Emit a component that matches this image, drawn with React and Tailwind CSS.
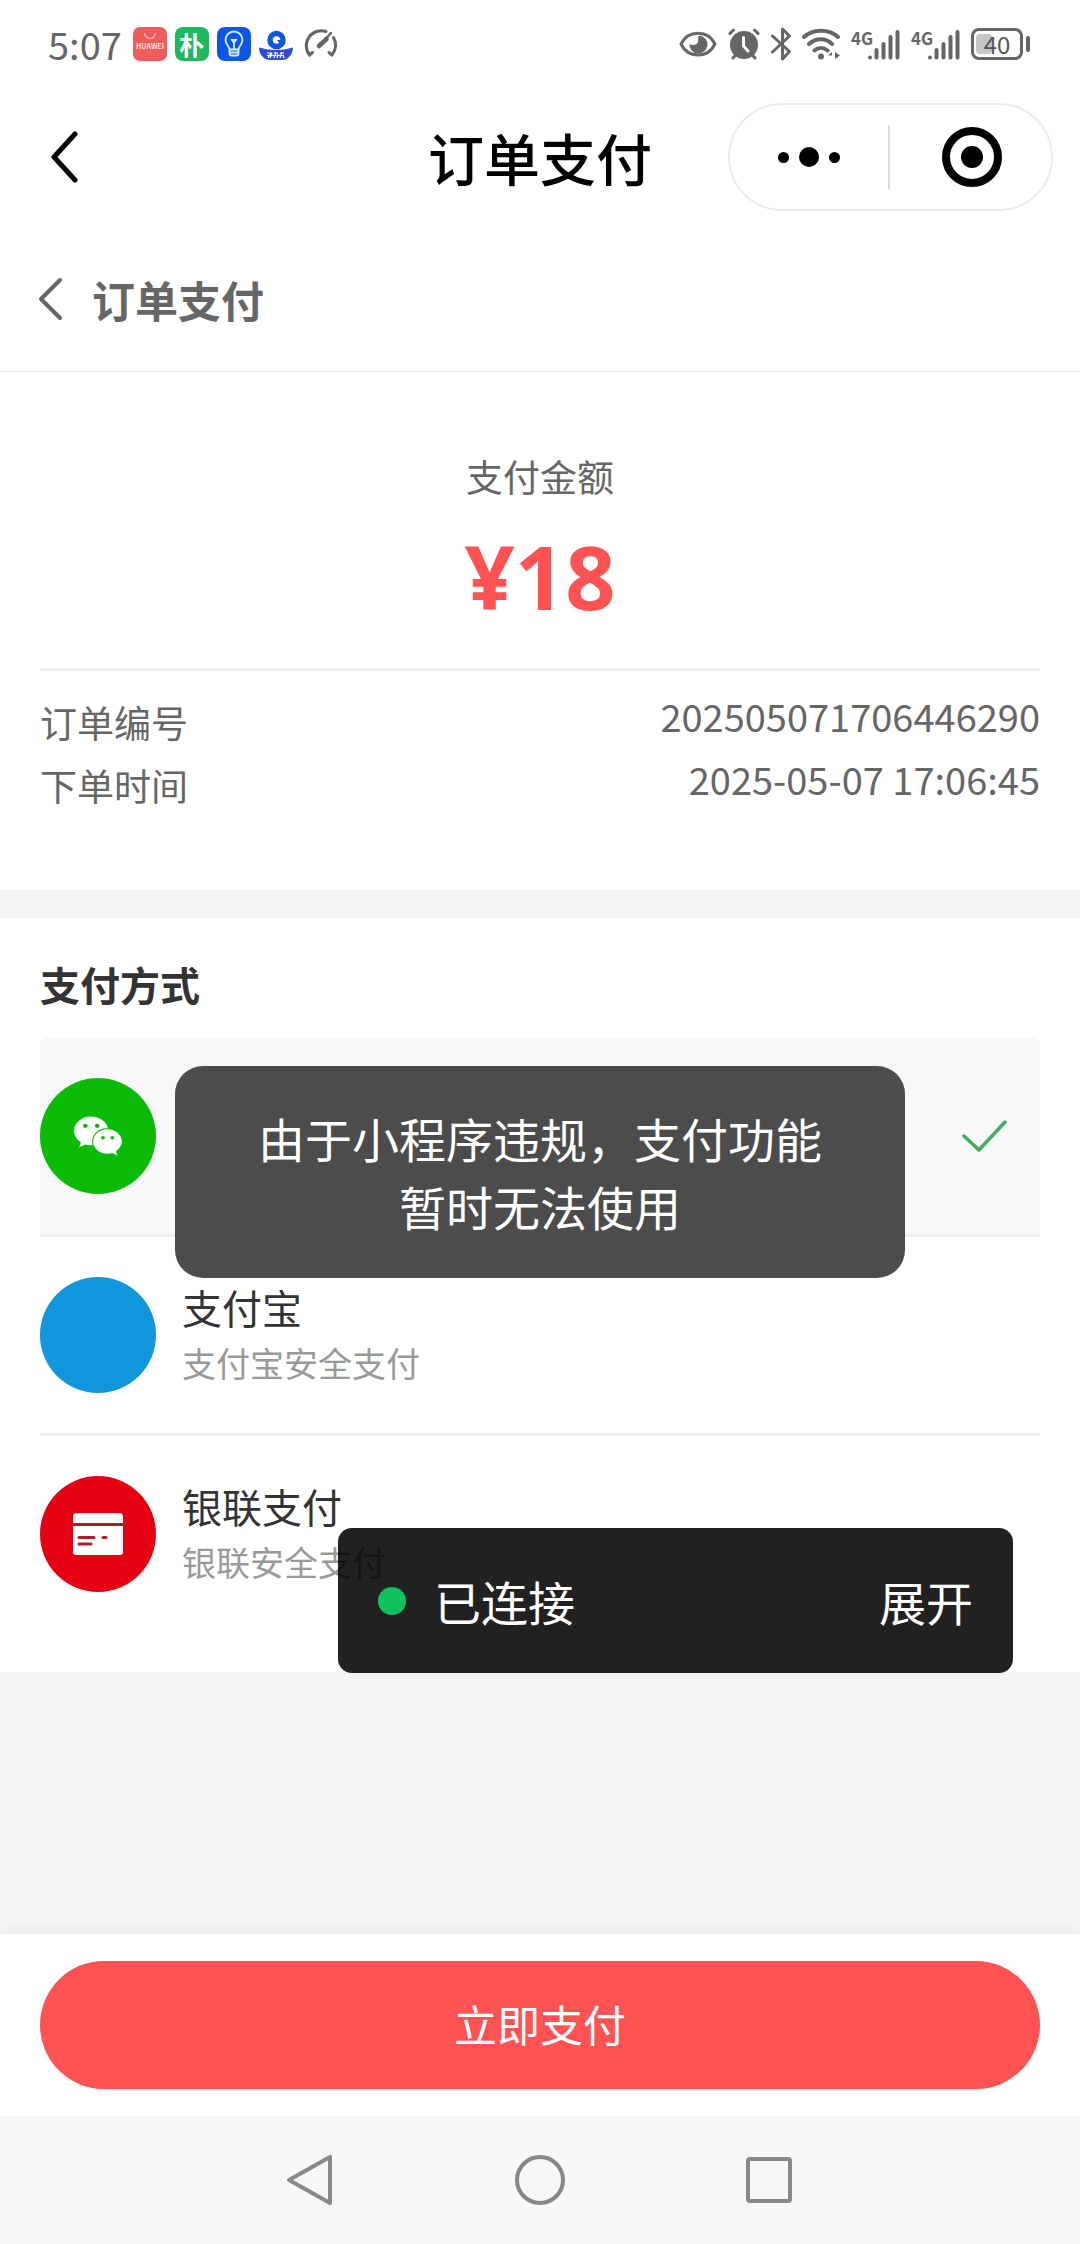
import { useState } from "react";
import { FaWeixin } from "react-icons/fa6";

const orderInfo = [
  { label: "订单编号", value: "202505071706446290" },
  { label: "下单时间", value: "2025-05-07 17:06:45" },
];

const payMethods = [
  {
    id: "wechat",
    color: "bg-[#0cba08]",
    icon: <FaWeixin className="size-[50px] text-white" />,
  },
  {
    id: "alipay",
    name: "支付宝",
    desc: "支付宝安全支付",
    color: "bg-[#1296db]",
    icon: null,
  },
  {
    id: "unionpay",
    name: "银联支付",
    desc: "银联安全支付",
    color: "bg-[#e50012]",
    icon: <CardIcon />,
  },
];

function CardIcon() {
  return (
    <svg width="50" height="42" viewBox="0 0 50 42" fill="#fff">
      <path d="M4 0h42a4 4 0 0 1 4 4v6H0V4a4 4 0 0 1 4-4z" />
      <path d="M0 13h50v26a3 3 0 0 1-3 3H3a3 3 0 0 1-3-3z" />
      <path d="M0 11.500h50" stroke="#b01c2a" strokeWidth="3" />
      <path
        d="M6 24.500h15M30 24.500h3M6 31h12"
        stroke="#b01c2a"
        strokeWidth="3"
        strokeLinecap="round"
      />
    </svg>
  );
}

function Signal() {
  return (
    <span className="flex w-[49px] items-start justify-between">
      <span className="text-[17px] leading-[17px] font-bold">4G</span>
      <svg
        className="-ml-2 shrink-0"
        width="33"
        height="31"
        viewBox="0 0 33 31"
        stroke="#666"
        strokeWidth="4"
        strokeLinecap="round"
      >
        <path d="M3 28.500v.01M9.500 28.500V21M16.500 28.500V15M23.500 28.500V8M30.500 28.500V3" />
      </svg>
    </span>
  );
}

function StatusBar() {
  return (
    <div className="flex h-[88px] items-center justify-between pr-[50px] pl-12 text-[#666]">
      <div className="flex items-center gap-2">
        <span className="text-[38px] leading-10">5:07</span>
        <svg className="ml-[3px]" width="34" height="34" viewBox="0 0 34 34">
          <rect width="34" height="34" rx="7" fill="#ee5c5c" />
          <path d="M11.500 6a5.500 5.500 0 0 0 11 0" fill="none" stroke="#fbb" strokeWidth="1.300" />
          <text x="17" y="22" fontSize="7" fontWeight="700" textAnchor="middle" fill="#ffe3e3">
            HUAWEI
          </text>
        </svg>
        <span className="flex size-[34px] items-center justify-center rounded-lg bg-[#1db860] text-[25px] leading-8 font-bold text-white">
          朴
        </span>
        <svg width="34" height="34" viewBox="0 0 34 34">
          <rect width="34" height="34" rx="8" fill="#0c56e8" />
          <g fill="none" stroke="#d7f2ff" strokeWidth="1.800" strokeLinecap="round">
            <path d="M12.500 22.500c0-3-4-5-4-9.500a8.500 8.500 0 0 1 17 0c0 4.500-4 6.500-4 9.500z" />
            <path d="M12.500 22.500v4a2 2 0 0 0 2 2h5a2 2 0 0 0 2-2v-4M13 25.500h8M17 22v-6l-2-3h4l-2 3" />
          </g>
        </svg>
        <svg width="34" height="34" viewBox="0 0 34 34">
          <circle cx="17.500" cy="13" r="6.500" fill="#fff" stroke="#0f55e0" strokeWidth="5.500" />
          <path d="M18 13h4v5z" fill="#0f55e0" />
          <path d="M0 20.500q17 5 34 0c0 8-6 12.500-11 12.500H11C6 33 0 28.500 0 20.500z" fill="#2f4bdc" />
          <path
            d="M8 26h4l-3 5M11 31l2-5M15 26h4M17 25l-2 6M18 31l1-4M21 26h4M23 25l-2 6M25 31l-1-3M8 28.500h17"
            fill="none"
            stroke="#fff"
            strokeWidth="1.200"
          />
        </svg>
        <svg width="37" height="34" viewBox="0 0 37 34" fill="none" stroke="#666" strokeWidth="3" strokeLinecap="round">
          <path d="M25 4.500A15 15 0 0 0 8.500 28l3-2.500" />
          <path d="M32.500 10.500A15 15 0 0 1 31 28l-3-2.500" />
          <path d="M30 6 20 17" strokeWidth="2.500" />
          <path d="M25.500 12 18 19" strokeWidth="4.500" />
        </svg>
      </div>

      <div className="flex items-center gap-[11px]">
        <svg width="38" height="26" viewBox="0 0 38 26" fill="none" stroke="#666" strokeWidth="3">
          <path d="M2 13C9-1.500 29-1.500 36 13 29 27.500 9 27.500 2 13z" strokeLinejoin="round" />
          <path d="M20 4.500a9 9 0 1 1-9.500 8c2 2.500 7.500 2 8.500-1.500.600-2.500-.500-5 1-6.500z" fill="#666" stroke="none" />
        </svg>
        <svg width="32" height="32" viewBox="0 0 32 32" fill="none" stroke="#666" strokeLinecap="round">
          <circle cx="16" cy="17" r="14" fill="#666" stroke="none" />
          <path d="M2 5.500 5.500 2M30 5.500 26.500 2M5 30l3-3.500M27 30l-3-3.500" strokeWidth="3" />
          <path d="M15.500 9.500V18l4.500 5" stroke="#fff" strokeWidth="3" />
        </svg>
        <svg width="20" height="34" viewBox="0 0 20 34" fill="none" stroke="#666" strokeWidth="3" strokeLinejoin="round" strokeLinecap="round">
          <path d="m1.500 9 17 15.500-7 7.500V2l7 7L1.500 25" />
        </svg>
        <svg width="38" height="32" viewBox="0 0 38 32" fill="none" stroke="#666" strokeWidth="4" strokeLinecap="round">
          <path d="M2 9c9-8.500 25-8.500 34 0M7 16c7-6.500 17-6.500 23 0M12.500 22.500c4-3.500 9-3.500 13 0" />
          <circle cx="19" cy="28.500" r="3" fill="#666" stroke="none" />
          <path d="m30 24-4 3.500h4zM33 31l5-3.500-5-3.500z" fill="#666" stroke="none" />
        </svg>
        <Signal />
        <Signal />
        <div className="flex items-center gap-[3px]">
          <span className="relative flex h-8 w-[52px] items-center justify-center rounded-lg border-[3px] border-[#666]">
            <span className="absolute left-0.5 h-5 w-4 rounded-sm bg-[#c6c6c6]" />
            <span className="relative text-2xl leading-6 text-[#555]">40</span>
          </span>
          <span className="h-4 w-1 rounded-sm bg-[#666]" />
        </div>
      </div>
    </div>
  );
}

function TitleBar() {
  return (
    <header className="relative flex h-[138px] items-center justify-between pr-[27px] pl-[46px]">
      <button type="button" aria-label="返回" className="p-1">
        <svg width="28" height="52" viewBox="0 0 28 52" fill="none" stroke="#000" strokeWidth="5" strokeLinecap="round" strokeLinejoin="round">
          <path d="M25 3 4 26l21 23" />
        </svg>
      </button>
      <h1 className="absolute inset-x-0 mx-auto w-fit text-[56px] leading-[72px] font-medium text-black">
        订单支付
      </h1>
      <div className="flex h-[108px] w-[325px] items-center rounded-full border-2 border-[#ececec]">
        <button type="button" aria-label="更多" className="flex flex-1 items-center justify-center gap-2.5">
          <span className="size-[11px] rounded-full bg-black" />
          <span className="size-5 rounded-full bg-black" />
          <span className="size-[11px] rounded-full bg-black" />
        </button>
        <span className="h-16 w-0.5 bg-[#dedede]" />
        <button type="button" aria-label="关闭" className="flex flex-1 items-center justify-center pl-1">
          <span className="flex size-[60px] items-center justify-center rounded-full border-8 border-black">
            <span className="size-[22px] rounded-full bg-black" />
          </span>
        </button>
      </div>
    </header>
  );
}

export default function App() {
  const [method, setMethod] = useState("wechat");

  return (
    <div className="relative flex min-h-screen flex-col bg-[#f5f5f5] font-['Noto_Sans_CJK_SC',sans-serif]">
      <div className="bg-white">
        <StatusBar />
        <TitleBar />
        <div className="flex h-[146px] items-center gap-7 border-b border-[#e2e2e2] px-9">
          <button type="button" aria-label="返回上一页">
            <svg width="28" height="44" viewBox="0 0 28 44" fill="none" stroke="#666" strokeWidth="4" strokeLinecap="round" strokeLinejoin="round">
              <path d="M24 3 5 22l19 19" />
            </svg>
          </button>
          <h2 className="text-[43px] leading-[60px] font-bold text-[#666]">订单支付</h2>
        </div>
      </div>

      <section className="bg-white px-10 pt-20 pb-[73px] text-[#666]">
        <div className="flex flex-col items-center border-b-[3px] border-[#efefef] pb-11">
          <p className="text-[37px] leading-[48px]">支付金额</p>
          <p className="mt-7 font-['Open_Sans','Noto_Sans_CJK_SC',sans-serif] text-[88px] leading-[96px] font-bold text-[#ff5353]">
            ¥18
          </p>
        </div>
        <dl className="pt-5">
          {orderInfo.map((item) => (
            <div key={item.label} className="flex items-start justify-between">
              <dt className="text-[37px] leading-[63px]">{item.label}</dt>
              <dd className="text-[38px] leading-[50px]">{item.value}</dd>
            </div>
          ))}
        </dl>
      </section>

      <section className="mt-7 bg-white px-10 pt-9 pb-10">
        <h3 className="text-[40px] leading-[60px] font-bold text-[#333]">支付方式</h3>
        <div className="mt-6">
          {payMethods.map((item) => (
            <label
              key={item.id}
              className={`flex items-center gap-[26px] py-10 pr-8 ${
                item.id === "unionpay" ? "" : "border-b-[3px] border-[#efefef]"
              } ${method === item.id ? "rounded-t-lg bg-[#f8f8f8]" : ""}`}
            >
              <input
                type="radio"
                name="method"
                value={item.id}
                aria-label={item.name ? undefined : "微信支付"}
                checked={method === item.id}
                onChange={() => setMethod(item.id)}
                className="sr-only"
              />
              <span className={`flex size-[116px] items-center justify-center rounded-full ${item.color}`}>
                {item.icon}
              </span>
              <span className="flex flex-1 flex-col">
                <span className="text-[40px] leading-[56px] text-[#333]">{item.name}</span>
                <span className="text-[34px] leading-[56px] text-[#999]">{item.desc}</span>
              </span>
              {method === item.id && (
                <svg width="48" height="36" viewBox="0 0 48 36" fill="none" stroke="#45ac5e" strokeWidth="3.500" strokeLinecap="round" strokeLinejoin="round">
                  <path d="m4 18 15 14L45 4" />
                </svg>
              )}
            </label>
          ))}
        </div>
      </section>

      <footer className="mt-auto">
        <div className="bg-white px-10 py-[27px] shadow-[0_-4px_16px_rgba(0,0,0,0.05)]">
          <button
            type="button"
            className="flex h-32 w-full justify-center rounded-full bg-[#ff5353] pt-8 text-[43px] leading-[60px] text-white"
          >
            立即支付
          </button>
        </div>
        <nav className="flex h-32 items-center justify-center gap-[178px] bg-[#f7f7f7]">
          <button type="button" aria-label="后退">
            <svg width="52" height="52" viewBox="0 0 52 52" fill="none" stroke="#888" strokeWidth="4" strokeLinejoin="round">
              <path d="M46 3v46L5 26z" />
            </svg>
          </button>
          <button type="button" aria-label="主屏幕">
            <svg width="52" height="52" viewBox="0 0 52 52" fill="none" stroke="#888" strokeWidth="4">
              <circle cx="26" cy="26" r="23" />
            </svg>
          </button>
          <button type="button" aria-label="最近任务">
            <svg width="52" height="52" viewBox="0 0 52 52" fill="none" stroke="#888" strokeWidth="4">
              <rect x="4" y="5" width="42" height="42" rx="2" />
            </svg>
          </button>
        </nav>
      </footer>

      <div
        role="alert"
        className="absolute inset-x-0 top-[1066px] mx-auto w-[730px] rounded-[28px] bg-[#4c4c4c] px-20 py-[38px] text-center text-[47px] leading-[68px] text-white"
      >
        由于小程序违规，支付功能暂时无法使用
      </div>

      {/* debug connection panel */}
      <div className="absolute right-[67px] bottom-[571px] flex h-[145px] w-[675px] items-center rounded-[14px] bg-black/87 px-10 text-[47px] leading-[68px] text-white">
        <span className="mr-7 size-7 rounded-full bg-[#10c160]" />
        <span className="flex-1">已连接</span>
        <button type="button">展开</button>
      </div>
    </div>
  );
}
